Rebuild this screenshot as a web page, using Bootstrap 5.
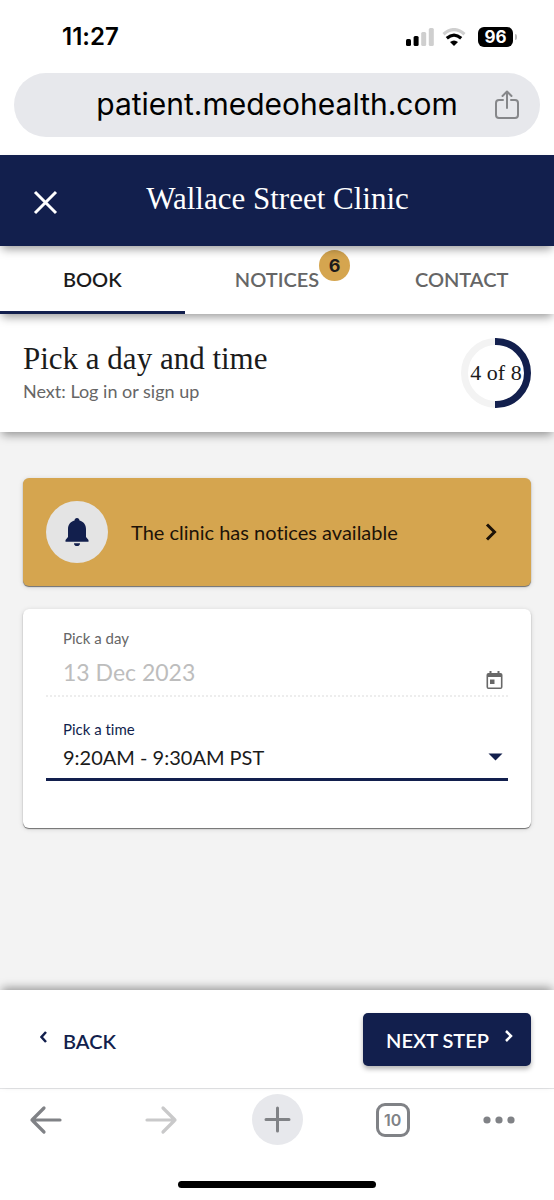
<!DOCTYPE html>
<html lang="en">
<head>
<meta charset="utf-8">
<meta name="viewport" content="width=device-width, initial-scale=1">
<title>Wallace Street Clinic</title>
<link href="https://cdn.jsdelivr.net/npm/bootstrap@5.3.0/dist/css/bootstrap.min.css" rel="stylesheet">
<style>
  :root { --navy: #121f4d; --gold: #d5a54f; --soft: #e7e8ec; --ink: #1b1b1b; --muted-ink: #666; }
  body { font-family: Lato, "Open Sans", sans-serif; font-size: 20px; line-height: 24px; font-variant-ligatures: none; color: var(--ink); background: #fff; }
  svg { display: block; flex: none; }
  .device-font { font-family: Inter, Roboto, sans-serif; color: #000; }
  .display-serif { font-family: "Liberation Serif", serif; font-weight: 400; }
  .plain-btn { border: 0; background: none; padding: 0; color: inherit; }

  .status-row { height: 73px; padding: 0 37px 0 62px; }
  .clock { font-size: 24px; font-weight: 600; }
  .battery-level { width: 35px; height: 20px; border-radius: 6px; background: #000; color: #fff; font-size: 17px; line-height: 20px; font-weight: 700; text-align: center; }
  .battery-cap { width: 2px; height: 6px; background: #bbb; margin-left: 2px; border-radius: 0 2px 2px 0; }
  .address { height: 64px; margin: 0 14px 18px; padding: 0 20px 0 46px; background: var(--soft); }
  .address input { border: 0; background: none; min-width: 0; font-size: 30px; padding: 0 0 2px; text-align: center; }

  .clinic-bar { height: 91px; background: var(--navy); color: #fff; padding: 0 33px; z-index: 3; box-shadow: 0 5px 9px -2px rgba(0,0,0,.4); }
  .clinic-bar h1 { font-size: 31px; line-height: 36px; padding-bottom: 4px; }
  .tab-row { z-index: 2; background: #fff; box-shadow: 0 5px 9px -2px rgba(0,0,0,.4); }
  .tab-row a { height: 68px; color: var(--muted-ink); font-weight: 600; border-bottom: 3px solid transparent; }
  .tab-row a.active { color: var(--ink); border-color: var(--navy); }
  .count { left: 100%; top: -17px; width: 31px; height: 31px; background: var(--gold); color: var(--ink); font: 700 18px/31px Inter, sans-serif; text-align: center; }

  .step-head { z-index: 1; background: #fff; height: 118px; padding: 0 23px; box-shadow: 0 5px 9px -2px rgba(0,0,0,.4); }
  .step-head h2 { font-size: 31px; line-height: 36px; }
  .step-head p { font-size: 18px; color: var(--muted-ink); line-height: 28px; }
  .ring { width: 70px; height: 70px; }
  .ring span { font-size: 22px; white-space: nowrap; }

  main { background: #f3f3f3; padding: 46px 23px 0; }
  .panel { border-radius: 6px; box-shadow: 0 1px 1px rgba(0,0,0,.5), 0 1px 5px rgba(0,0,0,.15); }
  .notice { background: var(--gold); color: #1d1308; height: 108px; padding: 0 27px 0 23px; margin-bottom: 23px; text-decoration: none; }
  .bell { width: 62px; height: 62px; background: #e4e4e4; margin-right: 23px; }
  .form-panel { background: #fff; padding: 19px 23px 47px; }
  .field-box { padding: 0 0 0 17px; }
  .field-box label { font-size: 15px; line-height: 20px; color: var(--muted-ink); }
  .field-box input, .field-box select { border: 0; outline: 0; background: none; padding: 0; min-width: 0; appearance: none; color: var(--ink); }
  .day-box { height: 69px; border-bottom: 2px dotted #ededed; }
  .day-box input:disabled { font-size: 23px; line-height: 32px; margin-top: 6px; color: #bdbdbd; }
  .day-box svg { margin-top: 23px; }
  .time-box { height: 62px; margin-top: 22px; border-bottom: 3px solid var(--navy); }
  .time-box label { color: var(--navy); }
  .time-box select { line-height: 30px; height: 36px; }

  .step-foot { height: 98px; background: #fff; padding: 0 23px; color: var(--navy); font-weight: 600; box-shadow: 0 -4px 9px -2px rgba(0,0,0,.4); z-index: 1; }
  .back-btn { padding-left: 17px; padding-top: 3px; }
  .next-btn { height: 53px; padding: 2px 18px 0 23px; background: var(--navy); color: #fff; border-radius: 5px; box-shadow: 0 3px 5px rgba(0,0,0,.3); }
  .browser-bar { height: 93px; border-top: 1px solid #e4e5e7; background: #fff; color: #808286; padding: 5px 20px 0; }
  .browser-bar > button { width: 51px; height: 51px; }
  .new-tab { background: var(--soft); }
  .tab-count { width: 34px; height: 34px; border: 3px solid #808286; border-radius: 9px; font: 600 16px/28px Inter, sans-serif; }
  .home-bar { width: 198px; height: 7px; background: #000; margin: 0 auto 12px; }
</style>
</head>
<body class="d-flex flex-column min-vh-100">

<div class="device-font">
  <div class="status-row d-flex justify-content-between align-items-center">
    <span class="clock">11:27</span>
    <div class="d-flex align-items-center">
      <svg width="28" height="18" viewBox="0 0 28 18" aria-label="Signal"><rect x="0" y="11" width="5" height="7" rx="1.5"/><rect x="7.600" y="8" width="5" height="10" rx="1.500"/><rect x="15.200" y="4" width="5" height="14" rx="1.500" fill="#cfcfcf"/><rect x="22.800" y="0" width="5" height="18" rx="1.500" fill="#cfcfcf"/></svg>
      <svg class="ms-2 me-2 pe-1" width="28" height="18" viewBox="0 0 24 18" fill="none" stroke="#000" stroke-width="3.200"><path d="M1.500 6.200Q12-3 22.500 6.200" stroke="#cfcfcf"/><path d="M4.800 10.300Q12 3.900 19.200 10.300"/><path d="M8 14q4-3.200 8 0L12 18z" fill="#000" stroke="none"/></svg>
      <span class="battery-level">96</span><span class="battery-cap"></span>
    </div>
  </div>
  <div class="address rounded-pill d-flex align-items-center">
    <input class="flex-grow-1 device-font" type="text" value="patient.medeohealth.com" aria-label="Address" readonly>
    <button class="plain-btn" type="button" aria-label="Share"><svg width="26" height="30" viewBox="0 0 26 30" fill="none" stroke="#86878a" stroke-width="2" stroke-linecap="round" stroke-linejoin="round"><path d="M9 10H5a3 3 0 0 0-3 3v12a3 3 0 0 0 3 3h16a3 3 0 0 0 3-3V13a3 3 0 0 0-3-3h-4M13 18V2M8.500 6 13 1.500 17.500 6"/></svg></button>
  </div>
</div>

<header class="clinic-bar position-relative d-flex align-items-center">
  <button class="plain-btn" type="button" aria-label="Close"><svg width="25" height="29" viewBox="0 0 25 25" fill="none" stroke="#fff" stroke-width="3"><path d="m2 4 21 21M23 4 2 25"/></svg></button>
  <h1 class="display-serif flex-grow-1 text-center mb-0 pe-4">Wallace Street Clinic</h1>
</header>

<nav class="tab-row position-relative d-flex">
  <a class="active col-4 d-flex align-items-center justify-content-center text-decoration-none" href="#book" aria-current="page">BOOK</a>
  <a class="col-4 d-flex align-items-center justify-content-center text-decoration-none" href="#notices"><span class="position-relative">NOTICES<span class="count position-absolute rounded-circle">6</span></span></a>
  <a class="col-4 d-flex align-items-center justify-content-center text-decoration-none" href="#contact">CONTACT</a>
</nav>

<section class="step-head position-relative d-flex align-items-center justify-content-between">
  <div>
    <h2 class="display-serif mb-0">Pick a day and time</h2>
    <p class="mb-0">Next: Log in or sign up</p>
  </div>
  <div class="ring position-relative d-flex align-items-center justify-content-center">
    <svg class="position-absolute top-0 start-0" width="70" height="70" viewBox="0 0 70 70" fill="none" stroke-width="7"><circle cx="35" cy="35" r="31.500" stroke="#f3f3f3"/><path d="M34 3.500h1a31.500 31.500 0 0 1 0 63h-1" stroke="#121f4d"/></svg>
    <span class="display-serif position-relative">4 of 8</span>
  </div>
</section>

<main class="flex-grow-1">
  <a class="notice panel d-flex align-items-center" href="#notices">
    <span class="bell rounded-circle d-flex align-items-center justify-content-center"><svg width="24" height="28" viewBox="0 0 24 28" fill="#121f4d"><path d="M12 0c1.500 0 2.400 1 2.500 2.400 4 1.100 6.500 4 6.500 8.600v8l2.500 3v1.800H.5V22L3 19v-8c0-4.600 2.500-7.500 6.500-8.600C9.600 1 10.500 0 12 0zM9 25.200h6a3 2.800 0 0 1-6 0z"/></svg></span>
    <span class="flex-grow-1">The clinic has notices available</span>
    <svg width="24" height="18" viewBox="0 0 24 18" fill="none" stroke="#1d1308" stroke-width="3"><path d="m7 1.500 7.500 7.500L7 16.500"/></svg>
  </a>
  <form class="form-panel panel">
    <div class="field-box day-box">
      <label class="d-block" for="day">Pick a day</label>
      <div class="d-flex align-items-center">
        <input class="flex-grow-1" id="day" type="text" value="13 Dec 2023" disabled>
        <svg class="me-1" width="19" height="18" viewBox="0 0 16 18" fill="#686868"><path fill-rule="evenodd" d="M3 0h2v2h6V0h2v2h1a2 2 0 0 1 2 2v12a2 2 0 0 1-2 2H2a2 2 0 0 1-2-2V4a2 2 0 0 1 2-2h1zM1.600 6v10.400h12.800V6z"/><path d="M3.500 8.500H8V13H3.500z"/></svg>
      </div>
    </div>
    <div class="field-box time-box">
      <label class="d-block" for="time">Pick a time</label>
      <div class="d-flex align-items-center">
        <select class="flex-grow-1" id="time"><option>9:20AM - 9:30AM PST</option></select>
        <svg class="me-1" width="17" height="8" viewBox="0 0 17 8"><path d="M1.500 .5h14L8.500 7.500z" fill="#121f4d"/></svg>
      </div>
    </div>
  </form>
</main>

<footer>
  <div class="step-foot position-relative d-flex align-items-center justify-content-between">
    <button class="plain-btn back-btn fw-semibold d-flex align-items-center" type="button"><svg class="me-3 mb-2" width="7" height="12" viewBox="0 0 7 12" fill="none" stroke="currentColor" stroke-width="2.500"><path d="M6 1 1.500 6 6 11"/></svg>BACK</button>
    <button class="plain-btn next-btn fw-semibold d-flex align-items-center" type="button">NEXT STEP<svg class="ms-3 mb-2" width="8" height="12" viewBox="0 0 8 12" fill="none" stroke="currentColor" stroke-width="2.500"><path d="m1 1 5 5-5 5"/></svg></button>
  </div>
  <div class="browser-bar d-flex justify-content-between align-items-start">
    <button class="plain-btn d-flex align-items-center justify-content-center" type="button" aria-label="Back"><svg width="34" height="34" viewBox="0 0 34 34" fill="none" stroke="currentColor" stroke-width="3.200" stroke-linecap="round" stroke-linejoin="round"><path d="M31 17H3M15 5 3 17l12 12"/></svg></button>
    <button class="plain-btn d-flex align-items-center justify-content-center" type="button" aria-label="Forward"><svg width="34" height="34" viewBox="0 0 34 34" fill="none" stroke="#c9c9ca" stroke-width="3.200" stroke-linecap="round" stroke-linejoin="round"><path d="M3 17h28M19 5l12 12-12 12"/></svg></button>
    <button class="plain-btn new-tab rounded-circle d-flex align-items-center justify-content-center" type="button" aria-label="New tab"><svg width="27" height="27" viewBox="0 0 27 27" fill="none" stroke="#808286" stroke-width="3" stroke-linecap="round"><path d="M13.500 2v23M2 13.500h23"/></svg></button>
    <button class="plain-btn d-flex align-items-center justify-content-center" type="button" aria-label="Open tabs"><span class="tab-count">10</span></button>
    <button class="plain-btn d-flex align-items-center" type="button" aria-label="More"><svg width="34" height="34" viewBox="0 0 34 34" fill="currentColor"><circle cx="4" cy="17" r="3.600"/><circle cx="16" cy="17" r="3.600"/><circle cx="28" cy="17" r="3.600"/></svg></button>
  </div>
  <div class="home-bar rounded-pill"></div>
</footer>

<script src="https://cdn.jsdelivr.net/npm/bootstrap@5.3.0/dist/js/bootstrap.bundle.min.js"></script>
</body>
</html>
